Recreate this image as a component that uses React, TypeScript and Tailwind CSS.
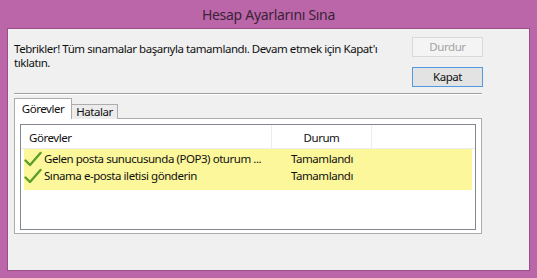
import React from 'react';

const font = { fontFamily: '"Noto Sans", "Open Sans", "Liberation Sans", sans-serif' };

interface TaskRow {
  name: string;
  status: string;
}

const rows: TaskRow[] = [
  { name: 'Gelen posta sunucusunda (POP3) oturum ...', status: 'Tamamlandı' },
  { name: 'Sınama e-posta iletisi gönderin', status: 'Tamamlandı' },
];

function Check() {
  return (
    <svg width="18" height="16" viewBox="0 0 18 16" className="shrink-0">
      <path
        d="M1.5 9.5 L6 14 L16.5 2"
        fill="none"
        stroke="#5b9e2a"
        strokeWidth="2.4"
        strokeLinecap="round"
        strokeLinejoin="round"
      />
    </svg>
  );
}

export default function App() {
  return (
    <div
      className="relative w-[537px] h-[278px] bg-[#bb66a9] pt-[28px] pl-[7px] pr-[7px] pb-[7px] text-[11.5px] tracking-[-0.45px] text-[#111]"
      style={font}
    >
      {/* Title bar */}
      <div className="absolute top-0 left-0 w-[537px] h-[28px] flex items-center justify-center text-[14px] tracking-[-0.3px] text-[#3b2237]">
        Hesap Ayarlarını Sına
      </div>

      {/* Client area */}
      <div className="h-[243px] border border-[#9a4f8b] bg-[#f0f0f0] pl-[6px] pr-[46px] pt-[8px]">
        {/* Message + buttons */}
        <div className="flex">
          <p className="flex-1 pt-[5px] leading-[14px] whitespace-nowrap">
            Tebrikler! Tüm sınamalar başarıyla tamamlandı. Devam etmek için Kapat'ı
            <br />
            tıklatın.
          </p>
          <div className="w-[71px] flex flex-col gap-[10px]">
            <button className="h-[20px] border border-[#d9d9d9] bg-[#f4f4f4] text-[#a3a3a3] leading-none">
              Durdur
            </button>
            <button className="h-[20px] border border-[#4f9ae0] bg-[#e3e3e3] leading-none">
              Kapat
            </button>
          </div>
        </div>

        {/* Separator */}
        <div className="mt-[6px] mr-px h-px bg-[#a0a0a0] border-b border-white box-content" />

        {/* Tabs */}
        <div className="mt-[4px] mr-px flex items-end h-[20px]">
          <div className="h-[21px] w-[58px] bg-white border border-b-0 border-[#acacac] flex items-center justify-center relative z-10">
            Görevler
          </div>
          <div className="h-[15px] w-[46px] bg-[#ececec] border border-l-0 border-b-0 border-[#acacac] flex items-center justify-center">
            Hatalar
          </div>
        </div>

        {/* Tab panel */}
        <div className="mr-px h-[116px] border border-[#acacac] bg-white px-[5px] pt-[5px] -mt-px">
          <div className="h-[106px] border border-[#828790] bg-white">
            {/* Header */}
            <div className="h-[24px] flex items-center border-b border-[#ececec]">
              <div className="w-[251px] pl-[8px] pt-[2px] border-r border-[#ececec] h-full flex items-center">
                Görevler
              </div>
              <div className="w-[100px] pt-[2px] border-r border-[#ececec] h-full flex items-center justify-center">
                Durum
              </div>
            </div>

            {/* Rows */}
            <div className="ml-[3px] w-[448px] h-[41px] bg-[#fcf79b] pt-px">
              {rows.map((r) => (
                <div key={r.name} className="h-[17px] flex items-center">
                  <div className="w-[248px] flex items-center gap-[2px] overflow-hidden whitespace-nowrap">
                    <Check />
                    <span>{r.name}</span>
                  </div>
                  <div className="pl-[19px]">{r.status}</div>
                </div>
              ))}
            </div>
          </div>
        </div>
      </div>
    </div>
  );
}
